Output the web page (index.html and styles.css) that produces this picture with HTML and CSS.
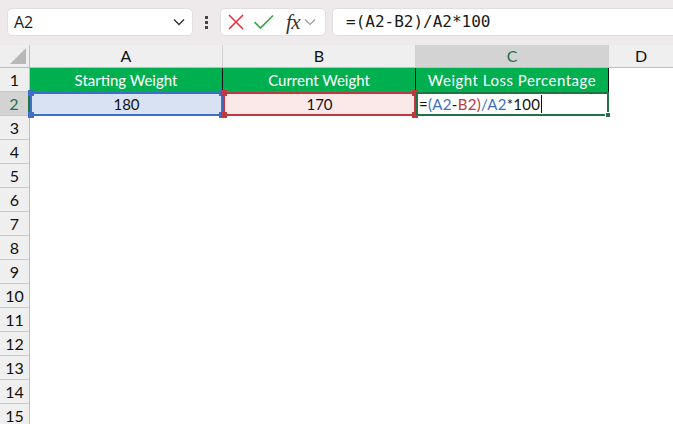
FILE: index.html
```html
<!DOCTYPE html>
<html>
<head>
<meta charset="utf-8">
<link rel="stylesheet" href="styles.css">
</head>
<body>
<div class="toolbar">
  <div class="namebox">
    <span class="nb-text">A2</span>
    <svg class="chev" width="12" height="8" viewBox="0 0 12 8"><path d="M1 1.5 L6 6.5 L11 1.5" fill="none" stroke="#333" stroke-width="1.4"/></svg>
  </div>
  <div class="dots"><span></span><span></span><span></span></div>
  <div class="fbtns">
    <svg class="b-x" width="18" height="18" viewBox="0 0 18 18"><path d="M2 2 L16 16 M16 2 L2 16" stroke="#e8333a" stroke-width="1.6" fill="none"/></svg>
    <svg class="b-ok" width="22" height="18" viewBox="0 0 22 18"><path d="M1.5 9 L7.5 15 L20 2.5" stroke="#3aa24a" stroke-width="1.6" fill="none"/></svg>
    <span class="fx">fx</span>
    <svg class="b-ch" width="12" height="8" viewBox="0 0 12 8"><path d="M1 1.5 L6 6.5 L11 1.5" fill="none" stroke="#999" stroke-width="1.2"/></svg>
  </div>
  <div class="fbar">=(A2-B2)/A2*100</div>
</div>
<div class="sheet">
  <div class="corner"><svg width="16" height="16" viewBox="0 0 16 16"><path d="M16 0 L16 16 L0 16 Z" fill="#b8b8b8"/></svg></div>
  <div class="ch">A</div>
  <div class="ch">B</div>
  <div class="ch sel">C</div>
  <div class="ch last">D</div>

  <div class="rh">1</div>
  <div class="c hdr">Starting Weight</div>
  <div class="c hdr">Current Weight</div>
  <div class="c hdr wide">Weight Loss Percentage</div>
  <div class="c"></div>

  <div class="rh selr">2</div>
  <div class="c ra">180<i class="h tl"></i><i class="h tr"></i><i class="h bl"></i><i class="h br"></i></div>
  <div class="c rb">170<i class="h tl"></i><i class="h tr"></i><i class="h bl"></i><i class="h br"></i></div>
  <div class="c edit"><span>=</span><span class="cb">(A2</span><span>-</span><span class="cr">B2)</span><span class="cb">/A2</span><span>*100</span><span class="caret"></span><i class="fill"></i></div>
  <div class="c"></div>

  <div class="rh">3</div><div class="c"></div><div class="c"></div><div class="c"></div><div class="c"></div>
  <div class="rh">4</div><div class="c"></div><div class="c"></div><div class="c"></div><div class="c"></div>
  <div class="rh">5</div><div class="c"></div><div class="c"></div><div class="c"></div><div class="c"></div>
  <div class="rh">6</div><div class="c"></div><div class="c"></div><div class="c"></div><div class="c"></div>
  <div class="rh">7</div><div class="c"></div><div class="c"></div><div class="c"></div><div class="c"></div>
  <div class="rh">8</div><div class="c"></div><div class="c"></div><div class="c"></div><div class="c"></div>
  <div class="rh">9</div><div class="c"></div><div class="c"></div><div class="c"></div><div class="c"></div>
  <div class="rh">10</div><div class="c"></div><div class="c"></div><div class="c"></div><div class="c"></div>
  <div class="rh">11</div><div class="c"></div><div class="c"></div><div class="c"></div><div class="c"></div>
  <div class="rh">12</div><div class="c"></div><div class="c"></div><div class="c"></div><div class="c"></div>
  <div class="rh">13</div><div class="c"></div><div class="c"></div><div class="c"></div><div class="c"></div>
  <div class="rh">14</div><div class="c"></div><div class="c"></div><div class="c"></div><div class="c"></div>
  <div class="rh">15</div><div class="c"></div><div class="c"></div><div class="c"></div><div class="c"></div>
</div>
</body>
</html>
```
FILE: styles.css
```css
* { box-sizing: border-box; }
html, body { margin: 0; padding: 0; background: #fff; overflow: hidden; }
body { width: 673px; height: 424px; font-family: "Lato", "Liberation Sans", sans-serif; }

.toolbar {
  height: 45px;
  background: #eeeaec;
  display: flex;
  align-items: flex-start;
  padding: 8px 0 0 7px;
}
.namebox {
  width: 186px; height: 28px;
  background: #fff;
  border: 1px solid #e2dee0;
  border-radius: 5px;
  display: flex; align-items: center; justify-content: space-between;
  padding: 0 7px 0 6px;
}
.nb-text { font-family: "Open Sans", "Liberation Sans", sans-serif; font-size: 16px; color: #1a1a1a; }
.dots {
  width: 27px; height: 28px;
  display: flex; flex-direction: column; align-items: center; justify-content: center; gap: 2px;
}
.dots span { width: 3px; height: 3px; background: #444; display: block; }
.fbtns {
  width: 106px; height: 28px;
  background: #fff;
  border: 1px solid #e2dee0;
  border-radius: 5px;
  display: flex; align-items: center;
  padding: 0 0 0 6px;
}
.b-ok { margin-left: 8px; }
.fx {
  font-family: "Liberation Serif", serif; font-style: italic; font-size: 21px; color: #333;
  margin-left: 11px; line-height: 1;
  letter-spacing: -0.5px;
}
.b-ch { margin-left: 4px; }
.fbar {
  margin-left: 6px;
  flex: 1; height: 28px;
  background: #fff;
  border: 1px solid #e2dee0;
  border-right: none;
  border-radius: 5px 0 0 5px;
  font-family: "DejaVu Sans Mono", "Liberation Mono", monospace;
  font-size: 16px; color: #1a1a1a;
  padding-left: 13px;
  line-height: 26px;
}

.sheet {
  display: grid;
  grid-template-columns: 30px 193px 193px 193px 1fr;
  grid-template-rows: 23px repeat(15, 24px);
  background: #fff;
}
.corner {
  background: #efefef;
  border-right: 1px solid #bdbdbd;
  border-bottom: 1px solid #bdbdbd;
  display: flex; align-items: flex-end; justify-content: flex-end;
  padding: 0 3px 3px 0;
}
.ch {
  background: #efefef;
  border-right: 1px solid #d0d0d0;
  border-bottom: 1px solid #bdbdbd;
  text-align: center;
  font-size: 16px; line-height: 22px; color: #111;
}
.ch.sel { background: #d3d3d3; color: #217346; }
.ch.last { border-right: none; }
.rh {
  background: #efefef;
  border-right: 1px solid #bdbdbd;
  border-bottom: 1px solid #c8c8c8;
  text-align: center;
  font-size: 16px; line-height: 23px; color: #111;
}
.rh.selr { background: #d3d3d3; color: #217346; border-right: 2px solid #217346; }
.c { position: relative; font-size: 15px; line-height: 24px; text-align: center; color: #111; }
.c.hdr { background: #00b050; color: #fff; border-right: 1px solid #111; }
.c.hdr.wide { letter-spacing: 0.5px; }
.c.ra { background: #d9e2f3; border: 2px solid #3d6fc6; line-height: 20px; }
.c.rb { background: #fbe9e9; border: 2px solid #c0393f; line-height: 20px; }
.c.edit { border: 2px solid #217346; text-align: left; line-height: 20px; padding-left: 1px; display: flex; align-items: center; letter-spacing: 0.3px; }
.cb { color: #3d6fc6; }
.cr { color: #c0393f; }
.caret { display: inline-block; width: 1px; height: 18px; background: #111; margin-left: 1px; }
.h { position: absolute; width: 6px; height: 6px; }
.ra .h { background: #3d6fc6; }
.rb .h { background: #c0393f; }
.h.tl { left: -4px; top: -4px; }
.h.tr { right: -4px; top: -4px; }
.h.bl { left: -4px; bottom: -4px; }
.h.br { right: -4px; bottom: -4px; }
.fill { position: absolute; right: -4px; bottom: -4px; width: 6px; height: 6px; background: #217346; border: 1px solid #fff; }
```
